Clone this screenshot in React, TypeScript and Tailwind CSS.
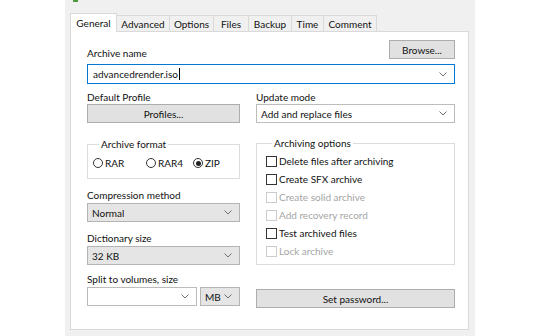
import { ReactNode } from 'react';

const tabs = [
  { label: 'General', w: 'w-[47px]' },
  { label: 'Advanced', w: 'w-[54px]' },
  { label: 'Options', w: 'w-[45px]' },
  { label: 'Files', w: 'w-[36px]' },
  { label: 'Backup', w: 'w-[44px]' },
  { label: 'Time', w: 'w-[33px]' },
  { label: 'Comment', w: 'w-[54px]' },
];

const options = [
  { label: 'Delete files after archiving', enabled: true },
  { label: 'Create SFX archive', enabled: true },
  { label: 'Create solid archive', enabled: false },
  { label: 'Add recovery record', enabled: false },
  { label: 'Test archived files', enabled: true },
  { label: 'Lock archive', enabled: false },
];

function Chevron() {
  return (
    <svg width="8" height="5" viewBox="0 0 8 5" className="shrink-0">
      <path d="M0.5 0.5 L4 4 L7.5 0.5" fill="none" stroke="#707070" strokeWidth="1" />
    </svg>
  );
}

function Combo({ value, gray, className = '' }: { value?: ReactNode; gray?: boolean; className?: string }) {
  return (
    <div
      className={`flex h-[19px] items-center justify-between border pl-[4px] pr-[7px] ${
        gray ? 'border-[#b4b4b4] bg-[#e5e5e5]' : 'border-[#bcbcbc] bg-white'
      } ${className}`}
    >
      <span className="truncate">{value}</span>
      <Chevron />
    </div>
  );
}

function Button({ children, className = '' }: { children: ReactNode; className?: string }) {
  return (
    <div
      className={`flex h-[19px] items-center justify-center border border-[#adadad] bg-[#e1e1e1] ${className}`}
    >
      {children}
    </div>
  );
}

function Radio({ label, checked, className = '' }: { label: string; checked?: boolean; className?: string }) {
  return (
    <div className={`flex items-center gap-[2px] ${className}`}>
      <span className="flex h-[10px] w-[10px] items-center justify-center rounded-full border border-[#333333] bg-white">
        {checked && <span className="h-[5px] w-[5px] rounded-full bg-[#222222]" />}
      </span>
      <span>{label}</span>
    </div>
  );
}

export default function App() {
  return (
    <div className="h-[336px] w-[560px] overflow-hidden bg-white font-['Lato',sans-serif] text-[10px] leading-[14px] text-[#111111]">
      <div className="ml-[65px] h-[336px] w-[410px] bg-[#f0f0f0]">
        <div className="h-[13px] pl-[8px]">
          <div className="h-[2px] w-[5px] bg-[#4f9a3a]" />
        </div>

        <div className="ml-[5px] flex h-[18px] items-end">
          {tabs.map((t, i) =>
            i === 0 ? (
              <div
                key={t.label}
                className={`relative z-10 -mb-px flex h-[19px] items-center justify-center border border-b-0 border-[#d9d9d9] bg-white ${t.w}`}
              >
                {t.label}
              </div>
            ) : (
              <div
                key={t.label}
                className={`-ml-px flex h-[16px] items-center justify-center border border-b-0 border-[#d9d9d9] bg-[#f0f0f0] pt-px ${t.w}`}
              >
                {t.label}
              </div>
            )
          )}
        </div>

        <div className="ml-[5px] h-[299px] w-[399px] border border-[#d9d9d9] bg-white pl-[16px] pr-[13px]">
          <div className="mt-[8px] flex items-start justify-between">
            <div className="mt-[6px]">Archive name</div>
            <Button className="w-[66px]">Browse...</Button>
          </div>

          <div className="mt-[4px] flex h-[20px] items-center justify-between border border-[#0078d7] pl-[5px] pr-[7px]">
            <span className="flex items-center">
              advancedrender.iso
              <span className="ml-px h-[12px] w-px bg-black" />
            </span>
            <Chevron />
          </div>

          <div className="flex gap-[16px]">
            <div className="w-[153px]">
              <div className="mt-[6px]">Default Profile</div>
              <Button className="mt-0 h-[18px]">Profiles...</Button>

              <fieldset className="mt-[14px] border border-[#dcdcdc] pb-[8px] pl-[5px]">
                <legend className="ml-[6px] px-[2px] leading-[14px]">Archive format</legend>
                <div className="mt-[5px] flex items-center">
                  <Radio className="w-[53px]" label="RAR" />
                  <Radio className="w-[47px]" label="RAR4" />
                  <Radio label="ZIP" checked />
                </div>
              </fieldset>

              <div className="mt-[9px]">Compression method</div>
              <Combo className="mt-px" value="Normal" gray />
              <div className="mt-[9px]">Dictionary size</div>
              <Combo className="mt-px" value="32 KB" gray />
              <div className="mt-[7px]">Split to volumes, size</div>
              <div className="mt-px flex gap-[3px]">
                <Combo className="w-[110px]" />
                <Combo className="w-[40px]" value="MB" gray />
              </div>
            </div>

            <div className="w-[199px]">
              <div className="mt-[6px]">Update mode</div>
              <Combo className="h-[18px]" value="Add and replace files" />

              <fieldset className="mt-[13px] border border-[#dcdcdc] pb-[4px] pl-[9px]">
                <legend className="ml-[6px] px-[2px] leading-[14px]">Archiving options</legend>
                <div className="mt-[2px]">
                  {options.map((o) => (
                    <div key={o.label} className="flex h-[18px] items-center gap-[2px]">
                      <span
                        className={`h-[11px] w-[11px] border bg-white ${
                          o.enabled ? 'border-[#333333]' : 'border-[#cccccc]'
                        }`}
                      />
                      <span className={o.enabled ? '' : 'text-[#a5a5a5]'}>{o.label}</span>
                    </div>
                  ))}
                </div>
              </fieldset>

              <Button className="mt-[24px]">Set password...</Button>
            </div>
          </div>
        </div>
      </div>
    </div>
  );
}
